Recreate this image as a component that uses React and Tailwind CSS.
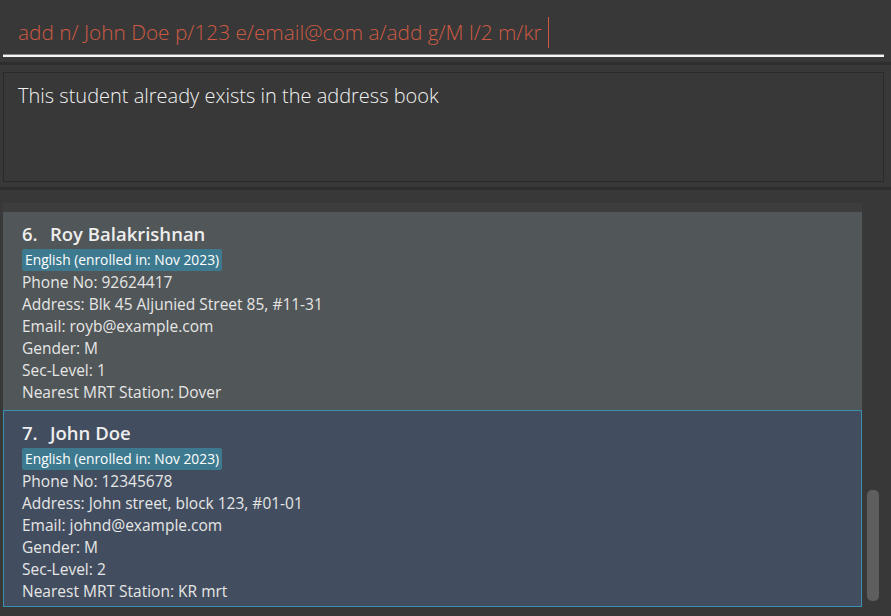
import React from "react";

const people = [
  {
    idx: 6,
    name: "Roy Balakrishnan",
    tag: "English (enrolled in: Nov 2023)",
    phone: "92624417",
    address: "Blk 45 Aljunied Street 85, #11-31",
    email: "royb@example.com",
    gender: "M",
    level: "1",
    mrt: "Dover",
    selected: false,
  },
  {
    idx: 7,
    name: "John Doe",
    tag: "English (enrolled in: Nov 2023)",
    phone: "12345678",
    address: "John street, block 123, #01-01",
    email: "johnd@example.com",
    gender: "M",
    level: "2",
    mrt: "KR mrt",
    selected: true,
  },
];

function Card({ p }) {
  return (
    <div
      className={
        p.selected
          ? "h-[197px] bg-[#424e5f] border border-[#3a8fae] pl-[18px] pt-[10px]"
          : "h-[198px] bg-[#515658] pl-[19px] pt-[10px]"
      }
    >
      <div className="flex text-[18.5px] font-semibold text-[#eeeeee] leading-[24px] h-[26px]">
        <span className="w-[28px]">{p.idx}.</span>
        <span>{p.name}</span>
      </div>
      <div className="flex mt-[1px]">
        <span className="bg-[#3e7a8f] text-white text-[13.8px] leading-[22px] px-[3px] rounded-[2px]">
          {p.tag}
        </span>
      </div>
      <div className="text-[15.5px] leading-[22px] text-[#e6e6e6]">
        <div>Phone No: {p.phone}</div>
        <div>Address: {p.address}</div>
        <div>Email: {p.email}</div>
        <div>Gender: {p.gender}</div>
        <div>Sec-Level: {p.level}</div>
        <div>Nearest MRT Station: {p.mrt}</div>
      </div>
    </div>
  );
}

export default function App() {
  return (
    <div
      className="w-[891px] h-[616px] bg-[#383838] overflow-hidden flex flex-col"
      style={{ fontFamily: "'Open Sans', 'Noto Sans', sans-serif" }}
    >
      {/* command box */}
      <div className="h-[62px] pl-[3px] pr-[7px] pt-[4px]">
        <div className="h-[53px] flex items-center pl-[15px] pt-[5px] border-b-2 border-[#f5f5f5] shadow-[0_-1px_0_#8a8a8a_inset]">
          <span className="text-[20.8px] font-light text-[#cf5a44] leading-none">
            add n/ John Doe p/123 e/email@com a/add g/M l/2 m/kr
          </span>
          <span className="ml-[6px] w-px h-[31px] bg-[#cf5a44]" />
        </div>
      </div>
      <div className="h-[3px] bg-[#2e2e2e]" />
      {/* result box */}
      <div className="h-[122px] pl-[3px] pr-[7px] pt-[7px]">
        <div className="h-[110px] border border-[#2a2a2a] pl-[14px] pt-[10px]">
          <span className="text-[20px] font-light text-[#f2f2f2] leading-[26px]">
            This student already exists in the address book
          </span>
        </div>
      </div>
      <div className="h-[3px] bg-[#2e2e2e]" />
      {/* list */}
      <div className="flex-1 flex pt-[13px]">
        <div className="w-[859px] ml-[3px] flex flex-col">
          <div className="h-[9px] bg-[#3d3d3d]" />
          <Card p={people[0]} />
          <Card p={people[1]} />
        </div>
        <div className="flex-1 flex flex-col pl-[5px] pr-[12px]">
          <div className="mt-[287px] h-[111px] rounded-[5px] bg-[#5e5e5e]" />
        </div>
      </div>
    </div>
  );
}
